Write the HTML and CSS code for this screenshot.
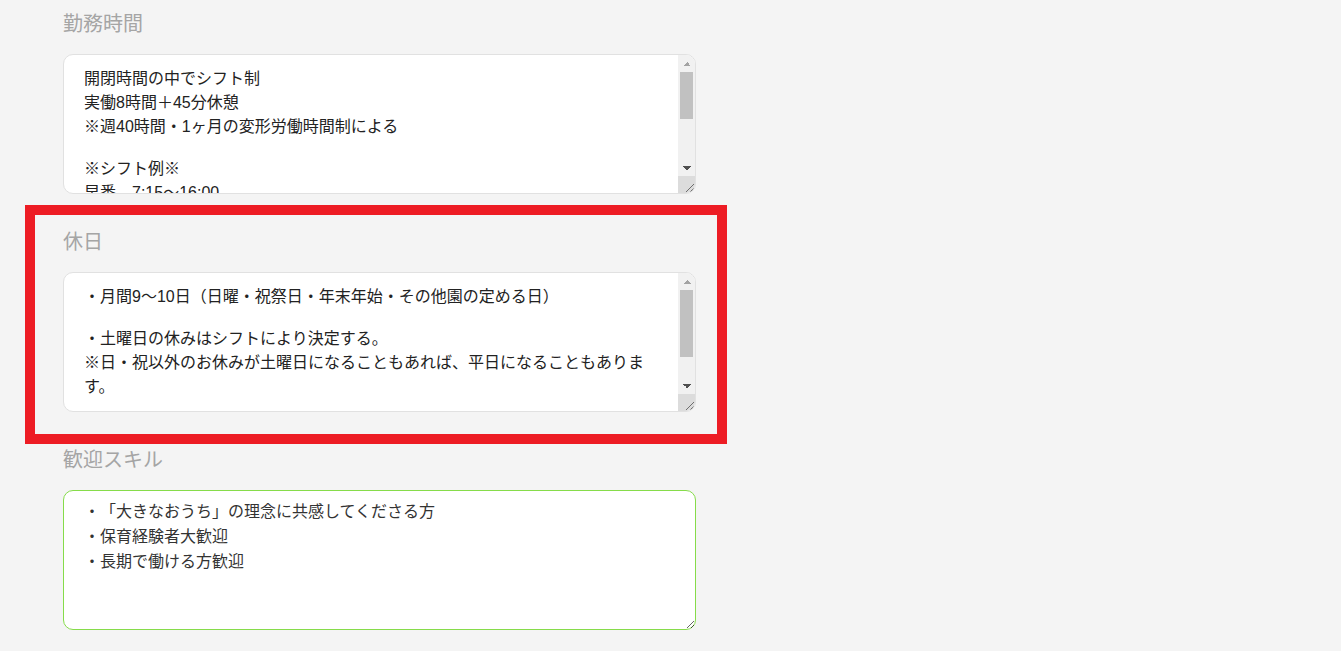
FILE: index.html
```html
<!DOCTYPE html>
<html lang="ja">
<head>
    <meta charset="UTF-8">
    <meta name="viewport" content="width=device-width, initial-scale=1.0">
    <title>求人情報</title>
    <link rel="stylesheet" href="styles.css">
</head>
<body>
    <div class="form">
        <div class="field">
            <label class="field-label" for="hours">勤務時間</label>
            <div class="text-box">
                <textarea id="hours" class="field-text">開閉時間の中でシフト制
実働8時間＋45分休憩
※週40時間・1ヶ月の変形労働時間制による

※シフト例※
早番　7:15～16:00
中番　8:30～17:15
遅番　10:00～18:45
延長　11:15～20:00

※土曜日は交代制</textarea>
                <div class="scrollbar">
                    <span class="sb-btn sb-up"></span>
                    <span class="sb-track"><span class="sb-thumb" style="height: 47px"></span></span>
                    <span class="sb-btn sb-down"></span>
                    <span class="sb-corner"></span>
                </div>
            </div>
        </div>

        <div class="field highlight">
            <label class="field-label" for="holiday">休日</label>
            <div class="text-box">
                <textarea id="holiday" class="field-text">・月間9～10日（日曜・祝祭日・年末年始・その他園の定める日）

・土曜日の休みはシフトにより決定する。
※日・祝以外のお休みが土曜日になることもあれば、平日になることもあります。

・有給休暇（入職6ヶ月後に付与）
・夏季休暇、年末年始休暇あり</textarea>
                <div class="scrollbar">
                    <span class="sb-btn sb-up"></span>
                    <span class="sb-track"><span class="sb-thumb" style="height: 67px"></span></span>
                    <span class="sb-btn sb-down"></span>
                    <span class="sb-corner"></span>
                </div>
            </div>
        </div>

        <div class="field">
            <label class="field-label" for="skill">歓迎スキル</label>
            <textarea id="skill" class="field-text single active">・「大きなおうち」の理念に共感してくださる方
・保育経験者大歓迎
・長期で働ける方歓迎</textarea>
        </div>
    </div>
</body>
</html>
```

FILE: styles.css
```css
* {
    margin: 0;
    padding: 0;
    box-sizing: border-box;
}

body {
    background-color: #f4f4f4;
    font-family: "Liberation Sans", "Noto Sans CJK JP", sans-serif;
    text-spacing-trim: space-all;
}

.form {
    width: 633px;
    margin-left: 63px;
    padding-top: 10px;
}

.field {
    position: relative;
    margin-bottom: 34px;
}

.field-label {
    display: block;
    font-size: 20px;
    line-height: 28px;
    color: #a5a5a5;
    margin-bottom: 16px;
}

.text-box {
    display: flex;
    height: 140px;
    border: 1px solid #e1e1e1;
    border-radius: 10px;
    background-color: #fff;
    overflow: hidden;
}

.field-text {
    display: block;
    flex: 1;
    min-width: 0;
    height: 100%;
    padding: 10px 20px;
    border: none;
    background-color: transparent;
    color: #222;
    font-family: "Liberation Sans", "Noto Sans CJK JP", sans-serif;
    font-size: 16px;
    line-height: normal;
    text-spacing-trim: space-all;
    overflow: hidden;
    resize: none;
    outline: none;
}

.field-text.single {
    width: 633px;
    height: 140px;
    padding-top: 8px;
    line-height: 25px;
    border: 1px solid #e1e1e1;
    border-radius: 10px;
    background-color: #fff;
    resize: both;
}

.field-text.active {
    border-color: #86dc4a;
    color: #333;
}

/* scrollbar drawn beside the text */
.scrollbar {
    display: flex;
    flex-direction: column;
    width: 17px;
    background-color: #f1f1f1;
}

.sb-btn {
    height: 17px;
    background-repeat: no-repeat;
    background-size: 8px 4px;
    background-position: center;
}

.sb-up {
    background-image: conic-gradient(from 135deg at 50% 0, #a3a3a3 90deg, transparent 0);
}

.sb-down {
    background-image: conic-gradient(from -45deg at 50% 100%, #505050 90deg, transparent 0);
}

.sb-track {
    flex: 1;
    padding: 0 2px;
}

.sb-thumb {
    display: block;
    background-color: #c1c1c1;
}

.sb-corner {
    height: 17px;
    background-color: #dcdcdc;
    background-image: linear-gradient(-45deg, transparent 2px, #6e6e6e 2px, #6e6e6e 3px, transparent 3px, transparent 5px, #6e6e6e 5px, #6e6e6e 6px, transparent 6px);
    background-size: 9px 9px;
    background-position: right 1px bottom 1px;
    background-repeat: no-repeat;
}

/* red marker round the holiday block */
.highlight::after {
    content: "";
    position: absolute;
    top: -23px;
    left: -38px;
    right: -31px;
    bottom: -32px;
    border: 10px solid #ed1c24;
    pointer-events: none;
}
```
